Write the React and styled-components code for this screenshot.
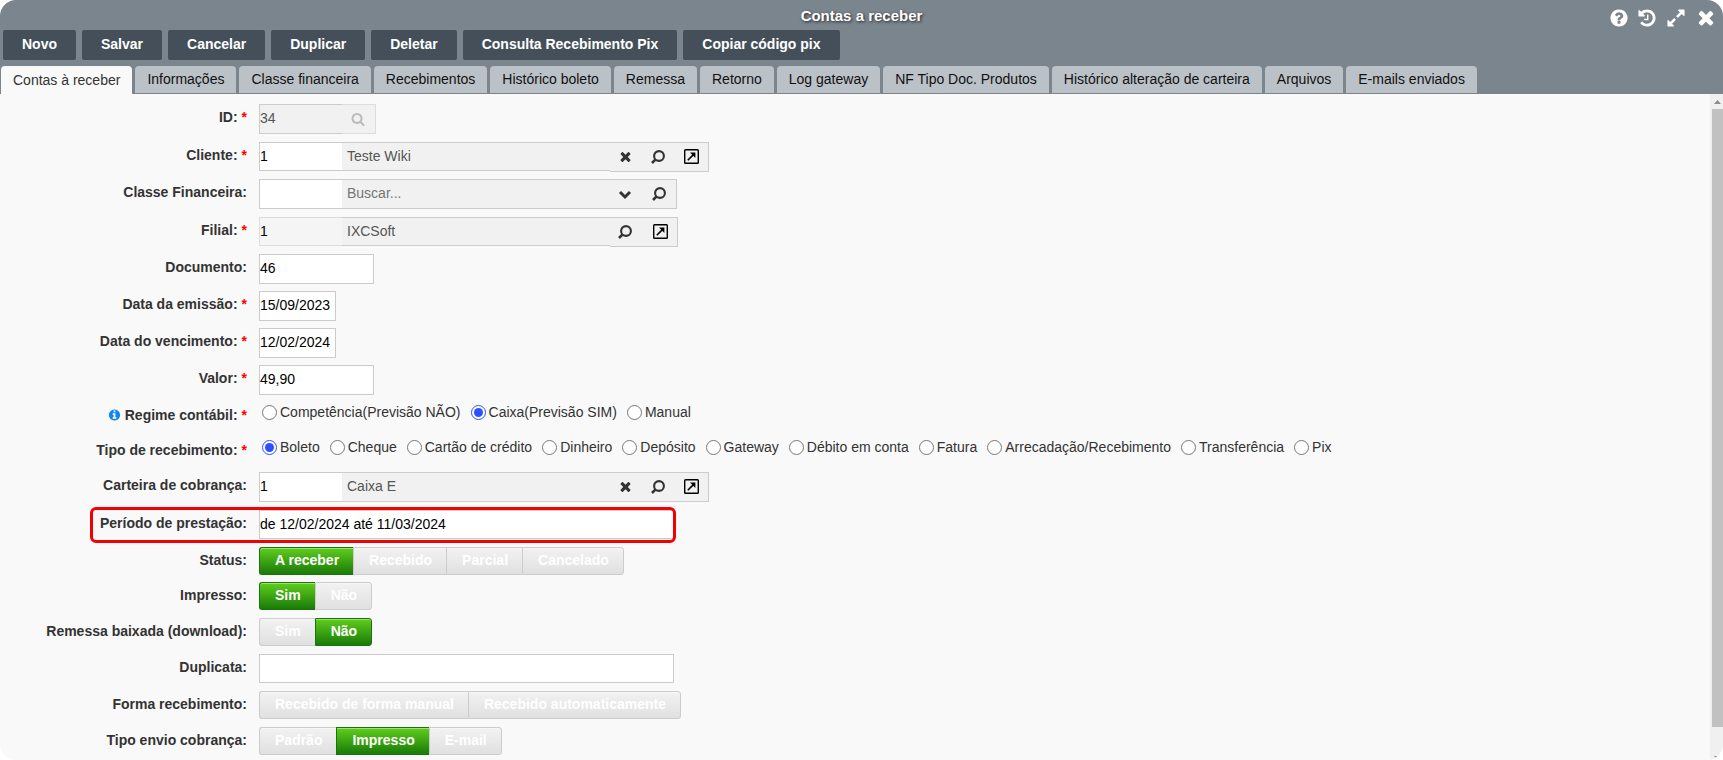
import React, { useState } from "react";
import styled, { createGlobalStyle } from "styled-components";

const GlobalStyle = createGlobalStyle`
  *, *::before, *::after {
    box-sizing: border-box;
  }

  body {
    margin: 0;
    background: #fff;
    color: #333;
    font-family: "Liberation Sans", Arial, sans-serif;
    font-size: 14px;
    line-height: 20px;
    overflow: hidden;
  }

  button, input {
    font-family: inherit;
    font-size: 14px;
  }
`;

const Window = styled.div`
  display: flex;
  flex-direction: column;
  height: 100vh;
  border-radius: 16px;
  overflow: hidden;
  background: #f9f9f9;
`;

const Header = styled.header`
  background: #7b858e;
  border-bottom: 1px solid #7b858e;
`;

const TitleBar = styled.div`
  display: grid;
  grid-template-columns: 1fr auto 1fr;
  align-items: center;
  height: 30px;
`;

const Title = styled.h1`
  grid-column: 2;
  margin: 0;
  font-size: 15px;
  line-height: 32px;
  color: #fff;
  text-shadow: 1px 1px 3px #222;
`;

const WindowActions = styled.div`
  display: flex;
  justify-content: flex-end;
  align-items: center;
  gap: 8px;
  padding: 3px 6px 0 0;
`;

const IconButton = styled.button`
  display: flex;
  align-items: center;
  justify-content: center;
  width: ${(p) => p.$width || 20}px;
  padding: 0;
  border: none;
  background: none;
  color: ${(p) => p.$color || "#333"};
  cursor: pointer;
`;

const Toolbar = styled.div`
  display: flex;
  gap: 6px;
  padding: 0 3px;
`;

const ToolButton = styled.button`
  height: 30px;
  padding: 0 19px 2px;
  border: none;
  border-radius: 2px;
  background: #444f5a;
  color: #fff;
  font-weight: bold;
  white-space: nowrap;
  cursor: pointer;
`;

const Tabs = styled.div`
  display: flex;
  gap: 3px;
  padding: 6px 1px 0;
`;

const Tab = styled.button`
  height: ${(p) => (p.$active ? 28 : 27)}px;
  margin-bottom: ${(p) => (p.$active ? -1 : 0)}px;
  padding: 0 12px 1px;
  border: none;
  border-radius: 4px 4px 0 0;
  background: ${(p) => (p.$active ? "#f9f9f9" : "#bac1c7")};
  color: ${(p) => (p.$active ? "#333" : "#111")};
  white-space: nowrap;
  cursor: pointer;
`;

const Body = styled.div`
  display: flex;
  flex: 1;
  min-height: 0;
`;

const Form = styled.form`
  flex: 1;
  min-width: 0;
  padding-top: 10px;
  overflow: hidden;
`;

const Row = styled.div`
  position: relative;
  display: grid;
  grid-template-columns: 247px 1fr;
  column-gap: 12px;
  align-items: start;
  height: ${(p) => p.$height || 37}px;
`;

const Highlight = styled.span`
  position: absolute;
  top: -3px;
  left: 90px;
  width: 586px;
  height: 36px;
  border: 3px solid #f40000;
  border-radius: 6px;
  pointer-events: none;
`;

const Label = styled.label`
  display: flex;
  justify-content: flex-end;
  align-items: center;
  gap: 4px;
  line-height: 26px;
  font-weight: bold;
  white-space: nowrap;
`;

const Required = styled.span`
  color: #f00;
`;

const TextInput = styled.input`
  width: ${(p) => p.$width}px;
  height: ${(p) => p.$height || 30}px;
  padding: 0 0 2px;
  border: 1px solid #ccc;
  border-radius: 0;
  background: #fff;
  color: #000;
  outline: none;
`;

const Lookup = styled.div`
  display: flex;
`;

const CodeInput = styled(TextInput)`
  border-right: none;
  border-color: ${(p) => (p.$muted ? "#ddd" : "#ccc")};
  background: ${(p) => (p.$muted ? "#f5f5f5" : "#fff")};

  &:disabled {
    background: #f1f1f1;
    color: #555;
  }
`;

const NameInput = styled(TextInput)`
  padding-left: 5px;
  border-width: 1px 0;
  background: #f1f1f1;
  color: #555;

  &::placeholder {
    color: #757575;
  }
`;

const AddOn = styled.div`
  display: flex;
  justify-content: space-between;
  align-items: center;
  width: ${(p) => p.$width}px;
  height: 30px;
  padding: 0 7px 1px ${(p) => (p.$light ? 6 : 5)}px;
  border: 1px solid ${(p) => (p.$light ? "#ddd" : "#ccc")};
  border-left: none;
  background: #f1f1f1;
`;

const RadioGroup = styled.div`
  display: flex;
  gap: 10px;
  padding-left: 3px;
`;

const RadioLabel = styled.label`
  display: flex;
  align-items: center;
  gap: 3px;
  line-height: 20px;
  white-space: nowrap;
`;

const Radio = styled.input`
  width: 15px;
  height: 15px;
  margin: 0;
  accent-color: #2b50ff;
`;

const ToggleGroup = styled.div`
  display: flex;
`;

const Toggle = styled.button`
  height: 28px;
  padding: 0 14px 2px 15px;
  border: 1px solid ${(p) => (p.$on ? "#1a7408" : "#ccc")};
  border-right-width: 0;
  background: ${(p) =>
    p.$on
      ? "linear-gradient(#5fce1c, #1a7a09)"
      : "linear-gradient(#f2f2f2, #e0e0e0)"};
  box-shadow: inset 0 1px 0 rgba(255, 255, 255, 0.4);
  color: #fff;
  font-weight: bold;
  white-space: nowrap;
  cursor: pointer;

  &:first-child {
    border-radius: 3px 0 0 3px;
  }

  &:last-child {
    border-right-width: 1px;
    border-radius: 0 3px 3px 0;
  }
`;

const Scrollbar = styled.div`
  display: flex;
  flex-direction: column;
  align-items: flex-end;
  justify-content: space-between;
  width: 13px;
  background: #f0f0f0;
`;

const ScrollArrow = styled.svg`
  display: block;
  width: 11px;
  height: 15px;
  fill: #8c8c8c;
`;

const ScrollThumb = styled.div`
  flex: 1;
  width: 11px;
  margin-bottom: 18px;
  background: #c1c1c1;
`;

const paths = {
  help: "M1024 1376v-192q0-14-9-23t-23-9h-192q-14 0-23 9t-9 23v192q0 14 9 23t23 9h192q14 0 23-9t9-23zm256-672q0-88-55.5-163t-138.5-116-170-41q-243 0-371 213-15 24 8 42l132 100q7 6 19 6 16 0 25-12 53-68 86-92 34-24 86-24 48 0 85.5 26t37.5 59q0 38-20 61t-68 45q-63 28-115.5 86.5t-52.5 125.5v36q0 14 9 23t23 9h192q14 0 23-9t9-23q0-19 21.5-49.5t54.5-49.5q32-18 49-28.5t46-35 44.5-48 28-60.5 12.5-81zm384 192q0 209-103 385.5t-279.5 279.5-385.5 103-385.5-103-279.5-279.5-103-385.5 103-385.5 279.5-279.5 385.5-103 385.5 103 279.5 279.5 103 385.5z",
  history:
    "M1664 896q0 156-61 298t-164 245-245 164-298 61q-172 0-327-72.5t-264-204.5q-7-10-6.5-22.5t8.5-20.5l137-138q10-9 25-9 16 2 23 12 73 95 179 147t225 52q104 0 198.5-40.5t163.5-109.5 109.5-163.5 40.5-198.5-40.5-198.5-109.5-163.5-163.5-109.5-198.5-40.5q-98 0-188 35.5t-160 101.5l137 138q31 30 14 69-17 40-59 40h-448q-26 0-45-19t-19-45v-448q0-42 40-59 39-17 69 14l130 129q107-101 244.5-156.5t284.5-55.5q156 0 298 61t245 164 164 245 61 298zm-640-288v448q0 14-9 23t-23 9h-320q-14 0-23-9t-9-23v-64q0-14 9-23t23-9h224v-352q0-14 9-23t23-9h64q14 0 23 9t9 23z",
  expand:
    "M883 1056q0 13-10 23l-332 332 144 144q19 19 19 45t-19 45-45 19h-448q-26 0-45-19t-19-45v-448q0-26 19-45t45-19 45 19l144 144 332-332q10-10 23-10t23 10l114 114q10 10 10 23zm781-864v448q0 26-19 45t-45 19-45-19l-144-144-332 332q-10 10-23 10t-23-10l-114-114q-10-10-10-23t10-23l332-332-144-144q-19-19-19-45t19-45 45-19h448q26 0 45 19t19 45z",
  close:
    "M1490 1322q0 40-28 68l-136 136q-28 28-68 28t-68-28l-294-294-294 294q-28 28-68 28t-68-28l-136-136q-28-28-28-68t28-68l294-294-294-294q-28-28-28-68t28-68l136-136q28-28 68-28t68 28l294 294 294-294q28-28 68-28t68 28l136 136q28 28 28 68t-28 68l-294 294 294 294q28 28 28 68z",
  search:
    "M1216 832q0-185-131.5-316.5t-316.5-131.5-316.5 131.5-131.5 316.5 131.5 316.5 316.5 131.5 316.5-131.5 131.5-316.5zm512 832q0 52-38 90t-90 38q-54 0-90-38l-343-342q-179 124-399 124-143 0-273.5-55.5t-225-150-150-225-55.5-273.5 55.5-273.5 150-225 225-150 273.5-55.5 273.5 55.5 225 150 150 225 55.5 273.5q0 220-124 399l343 343q37 37 37 90z",
  info: "M1152 1376v-160q0-14-9-23t-23-9h-96v-512q0-14-9-23t-23-9h-320q-14 0-23 9t-9 23v160q0 14 9 23t23 9h96v320h-96q-14 0-23 9t-9 23v160q0 14 9 23t23 9h448q14 0 23-9t9-23zm-128-896v-160q0-14-9-23t-23-9h-192q-14 0-23 9t-9 23v160q0 14 9 23t23 9h192q14 0 23-9t9-23zm640 416q0 209-103 385.5t-279.5 279.5-385.5 103-385.5-103-279.5-279.5-103-385.5 103-385.5 279.5-279.5 385.5-103 385.5 103 279.5 279.5 103 385.5z",
};

const Icon = ({ name, size }) => (
  <svg width={size} height={size} viewBox="0 0 1792 1792" fill="currentColor" aria-hidden="true">
    <path d={paths[name]} />
  </svg>
);

const FindIcon = () => (
  <svg width="14" height="14" viewBox="0 0 14 14" fill="none" stroke="currentColor" aria-hidden="true">
    <circle cx="8" cy="6" r="4.9" strokeWidth="2.1" />
    <path d="M4.6 9.400L1 13" strokeWidth="2.600" />
  </svg>
);

const OpenIcon = () => (
  <svg width="15" height="15" viewBox="0 0 15 15" fill="none" stroke="#000" aria-hidden="true">
    <rect x="0.7" y="0.7" width="13.6" height="13.6" rx="0.8" strokeWidth="1.4" />
    <path d="M3.800 11.200l5.600-5.600" strokeWidth="1.600" />
    <path d="M6 3.600h5.400v5.400z" fill="#000" stroke="none" />
  </svg>
);

const ChevronIcon = () => (
  <svg width="14" height="14" viewBox="0 0 14 14" fill="none" stroke="currentColor" aria-hidden="true">
    <path d="M2 5l5 5 5-5" strokeWidth="3" />
  </svg>
);

const actions = {
  clear: { title: "Limpar", icon: <Icon name="close" size={15} /> },
  find: { title: "Pesquisar", icon: <FindIcon /> },
  open: { title: "Abrir cadastro", icon: <OpenIcon /> },
  list: { title: "Listar", icon: <ChevronIcon /> },
};

const toolButtons = [
  "Novo",
  "Salvar",
  "Cancelar",
  "Duplicar",
  "Deletar",
  "Consulta Recebimento Pix",
  "Copiar código pix",
];

const tabs = [
  "Contas à receber",
  "Informações",
  "Classe financeira",
  "Recebimentos",
  "Histórico boleto",
  "Remessa",
  "Retorno",
  "Log gateway",
  "NF Tipo Doc. Produtos",
  "Histórico alteração de carteira",
  "Arquivos",
  "E-mails enviados",
];

const Field = ({ id, label, required, info, height, highlight, group, children }) => (
  <Row $height={height}>
    <Label as={group ? "span" : "label"} htmlFor={group ? undefined : id} id={group ? id : undefined}>
      {info && (
        <IconButton as="span" $width={13} $color="#0d86f2">
          <Icon name="info" size={14} />
        </IconButton>
      )}
      {label}:{required && <Required>*</Required>}
    </Label>
    {children}
    {highlight && <Highlight />}
  </Row>
);

const TextField = ({ id, value, width, inputHeight, ...rest }) => (
  <Field id={id} {...rest}>
    <TextInput id={id} defaultValue={value} $width={width} $height={inputHeight} />
  </Field>
);

const LookupField = ({ id, code, name, muted, short, buttons, width, ...rest }) => (
  <Field id={id} {...rest}>
    <Lookup>
      <CodeInput id={id} defaultValue={code} $width={83} $height={short ? 29 : 30} $muted={muted} />
      <NameInput
        aria-label={`${rest.label} - descrição`}
        defaultValue={name}
        placeholder="Buscar..."
        $width={268}
        $height={short ? 29 : 30}
      />
      <AddOn $width={width}>
        {buttons.map((key) => (
          <IconButton key={key} type="button" title={actions[key].title}>
            {actions[key].icon}
          </IconButton>
        ))}
      </AddOn>
    </Lookup>
  </Field>
);

const RadioField = ({ id, options, initial, ...rest }) => {
  const [selected, setSelected] = useState(initial);

  return (
    <Field id={id} group {...rest}>
      <RadioGroup role="radiogroup" aria-labelledby={id}>
        {options.map((option) => (
          <RadioLabel key={option}>
            <Radio
              type="radio"
              name={id}
              checked={selected === option}
              onChange={() => setSelected(option)}
            />
            {option}
          </RadioLabel>
        ))}
      </RadioGroup>
    </Field>
  );
};

const ToggleField = ({ id, options, initial, ...rest }) => {
  const [selected, setSelected] = useState(initial);

  return (
    <Field id={id} group {...rest}>
      <ToggleGroup role="group" aria-labelledby={id}>
        {options.map((option) => (
          <Toggle
            key={option}
            type="button"
            $on={selected === option}
            aria-pressed={selected === option}
            onClick={() => setSelected(option)}
          >
            {option}
          </Toggle>
        ))}
      </ToggleGroup>
    </Field>
  );
};

const App = () => {
  const [activeTab, setActiveTab] = useState(tabs[0]);

  return (
    <>
      <GlobalStyle />
      <Window>
        <Header>
          <TitleBar>
            <Title>Contas a receber</Title>
            <WindowActions>
              <IconButton $color="#fff" title="Ajuda">
                <Icon name="help" size={20} />
              </IconButton>
              <IconButton $color="#fff" title="Histórico">
                <Icon name="history" size={20} />
              </IconButton>
              <IconButton $color="#fff" $width={22} title="Expandir">
                <Icon name="expand" size={20} />
              </IconButton>
              <IconButton $color="#fff" $width={22} title="Fechar">
                <Icon name="close" size={23} />
              </IconButton>
            </WindowActions>
          </TitleBar>
          <Toolbar>
            {toolButtons.map((text) => (
              <ToolButton key={text}>{text}</ToolButton>
            ))}
          </Toolbar>
          <Tabs role="tablist">
            {tabs.map((tab) => (
              <Tab
                key={tab}
                role="tab"
                aria-selected={tab === activeTab}
                $active={tab === activeTab}
                onClick={() => setActiveTab(tab)}
              >
                {tab}
              </Tab>
            ))}
          </Tabs>
        </Header>
        <Body>
          <Form onSubmit={(e) => e.preventDefault()}>
            <Field id="registro" label="ID" required height={38}>
              <Lookup>
                <CodeInput id="registro" defaultValue="34" disabled $width={83} />
                <AddOn $width={34} $light>
                  <IconButton type="button" $color="#bbb" title="Pesquisar" disabled>
                    <Icon name="search" size={14} />
                  </IconButton>
                </AddOn>
              </Lookup>
            </Field>
            <LookupField
              id="cliente"
              label="Cliente"
              required
              code="1"
              name="Teste Wiki"
              short
              buttons={["clear", "find", "open"]}
              width={99}
            />
            <LookupField
              id="classe"
              label="Classe Financeira"
              height={38}
              buttons={["list", "find"]}
              width={67}
            />
            <LookupField
              id="filial"
              label="Filial"
              required
              code="1"
              name="IXCSoft"
              muted
              short
              buttons={["find", "open"]}
              width={68}
            />
            <TextField id="documento" label="Documento" value="46" width={115} />
            <TextField id="emissao" label="Data da emissão" required value="15/09/2023" width={77} />
            <TextField id="vencimento" label="Data do vencimento" required value="12/02/2024" width={77} />
            <TextField id="valor" label="Valor" required value="49,90" width={115} />
            <RadioField
              id="regime"
              label="Regime contábil"
              required
              info
              height={35}
              options={["Competência(Previsão NÃO)", "Caixa(Previsão SIM)", "Manual"]}
              initial="Caixa(Previsão SIM)"
            />
            <RadioField
              id="tipo"
              label="Tipo de recebimento"
              required
              height={35}
              options={[
                "Boleto",
                "Cheque",
                "Cartão de crédito",
                "Dinheiro",
                "Depósito",
                "Gateway",
                "Débito em conta",
                "Fatura",
                "Arrecadação/Recebimento",
                "Transferência",
                "Pix",
              ]}
              initial="Boleto"
            />
            <LookupField
              id="carteira"
              label="Carteira de cobrança"
              height={38}
              code="1"
              name="Caixa E"
              buttons={["clear", "find", "open"]}
              width={99}
            />
            <TextField
              id="periodo"
              label="Período de prestação"
              value="de 12/02/2024 até 11/03/2024"
              width={415}
              inputHeight={29}
              highlight
            />
            <ToggleField
              id="status"
              label="Status"
              height={35}
              options={["A receber", "Recebido", "Parcial", "Cancelado"]}
              initial="A receber"
            />
            <ToggleField id="impresso" label="Impresso" height={36} options={["Sim", "Não"]} initial="Sim" />
            <ToggleField
              id="remessa"
              label="Remessa baixada (download)"
              height={36}
              options={["Sim", "Não"]}
              initial="Não"
            />
            <TextField id="duplicata" label="Duplicata" value="" width={415} inputHeight={29} />
            <ToggleField
              id="forma"
              label="Forma recebimento"
              height={36}
              options={["Recebido de forma manual", "Recebido automaticamente"]}
            />
            <ToggleField
              id="envio"
              label="Tipo envio cobrança"
              height={36}
              options={["Padrão", "Impresso", "E-mail"]}
              initial="Impresso"
            />
          </Form>
          <Scrollbar aria-hidden="true">
            <ScrollArrow viewBox="0 0 11 15">
              <path d="M2 10l3.500-4 3.500 4z" />
            </ScrollArrow>
            <ScrollThumb />
            <ScrollArrow viewBox="0 0 11 15">
              <path d="M2 11l3.500 4 3.500-4z" />
            </ScrollArrow>
          </Scrollbar>
        </Body>
      </Window>
    </>
  );
};

export default App;
